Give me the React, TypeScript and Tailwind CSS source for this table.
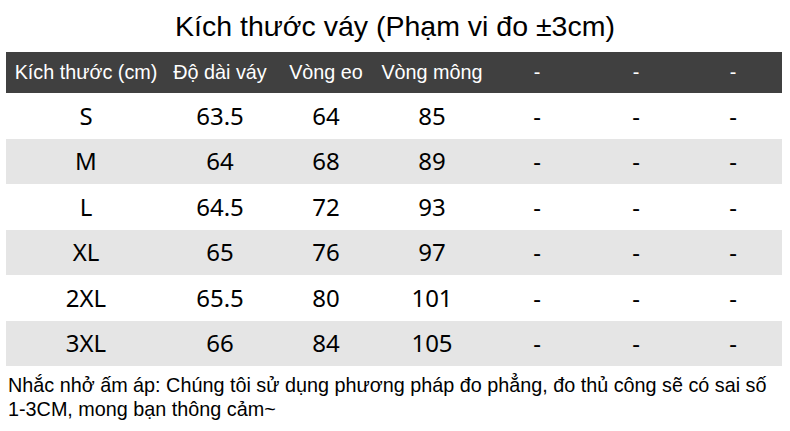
const headers = ["Kích thước (cm)", "Độ dài váy", "Vòng eo", "Vòng mông", "-", "-", "-"];

const rows = [
  ["S", "63.5", "64", "85"],
  ["M", "64", "68", "89"],
  ["L", "64.5", "72", "93"],
  ["XL", "65", "76", "97"],
  ["2XL", "65.5", "80", "101"],
  ["3XL", "66", "84", "105"],
];

const cols = "grid grid-cols-[160px_108px_104px_108px_102px_96px_98px]";

export default function App() {
  return (
    <div className="w-[790px] h-[431px] bg-white text-black overflow-hidden font-['Liberation_Sans',Arial,sans-serif]">
      <h1 className="pt-[6px] h-[52px] text-center text-[28.5px] leading-[40px]">
        Kích thước váy (Phạm vi đo ±3cm)
      </h1>
      <div className="mx-[6px] w-[776px]">
        <div className={`${cols} h-[41px] bg-[#404040] text-white text-[19.8px] items-center`}>
          {headers.map((h, i) => (
            <div key={i} className="text-center whitespace-nowrap">
              {h}
            </div>
          ))}
        </div>
        {rows.map((r, i) => (
          <div
            key={r[0]}
            className={`${cols} h-[45.5px] items-center text-[24px] font-['Noto_Sans','Open_Sans',sans-serif] ${
              i % 2 === 1 ? "bg-[#e5e5e5]" : "bg-white"
            }`}
          >
            {[...r, "-", "-", "-"].map((c, j) => (
              <div key={j} className="text-center leading-none">
                {c}
              </div>
            ))}
          </div>
        ))}
      </div>
      <p className="px-[8px] pt-[7px] text-[19.8px] leading-[24px]">
        Nhắc nhở ấm áp: Chúng tôi sử dụng phương pháp đo phẳng, đo thủ công sẽ có sai số 1-3CM, mong bạn thông cảm~
      </p>
    </div>
  );
}
